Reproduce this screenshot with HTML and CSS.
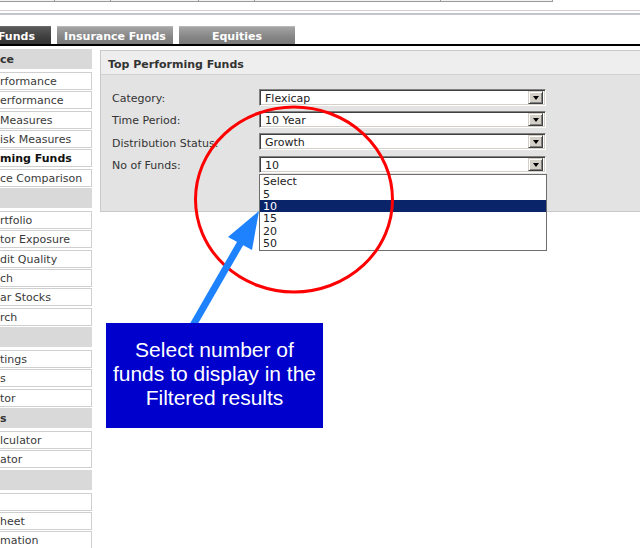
FILE: index.html
```html
<!DOCTYPE html>
<html>
<head>
<meta charset="utf-8">
<link rel="stylesheet" href="styles.css">
</head>
<body>
<div class="page">
  <div class="topcells">
    <div class="cell w55"></div>
    <div class="cell w56"></div>
    <div class="cell w88"></div>
    <div class="cell w56"></div>
    <div class="cell w186"></div>
    <div class="cell w112"></div>
  </div>
  <div class="rule1"></div>
  <div class="rule2"></div>
  <div class="tabs">
    <div class="tab active">Mutual Funds</div>
    <div class="tab">Insurance Funds</div>
    <div class="tab">Equities</div>
  </div>
  <div class="tabline"></div>
  <div class="main">
    <div class="sidebar">
      <div class="sh">ce</div>
      <div class="si">rformance</div>
      <div class="si">erformance</div>
      <div class="si">Measures</div>
      <div class="si">isk Measures</div>
      <div class="si cur">ming Funds</div>
      <div class="si">ce Comparison</div>
      <div class="sh"></div>
      <div class="si">rtfolio</div>
      <div class="si">tor Exposure</div>
      <div class="si">dit Quality</div>
      <div class="si">ch</div>
      <div class="si">ar Stocks</div>
      <div class="si">rch</div>
      <div class="sh"></div>
      <div class="si">tings</div>
      <div class="si">s</div>
      <div class="si">tor</div>
      <div class="sh">s</div>
      <div class="si">lculator</div>
      <div class="si">ator</div>
      <div class="sh"></div>
      <div class="si"></div>
      <div class="si">heet</div>
      <div class="si">mation</div>
    </div>
    <div class="panel">
      <div class="ptitle">Top Performing Funds</div>
      <div class="form">
        <div class="row">
          <div class="lbl">Category:</div>
          <div class="sel"><span class="val">Flexicap</span><span class="btn"><span class="tri"></span></span></div>
        </div>
        <div class="row">
          <div class="lbl">Time Period:</div>
          <div class="sel"><span class="val">10 Year</span><span class="btn"><span class="tri"></span></span></div>
        </div>
        <div class="row">
          <div class="lbl">Distribution Status:</div>
          <div class="sel"><span class="val">Growth</span><span class="btn"><span class="tri"></span></span></div>
        </div>
        <div class="row">
          <div class="lbl">No of Funds:</div>
          <div class="sel open"><span class="val">10</span><span class="btn"><span class="tri"></span></span>
            <div class="list">
              <div class="opt">Select</div>
              <div class="opt">5</div>
              <div class="opt hl">10</div>
              <div class="opt">15</div>
              <div class="opt">20</div>
              <div class="opt">50</div>
            </div>
          </div>
        </div>
      </div>
    </div>
  </div>
  <svg class="overlay" width="640" height="548" viewBox="0 0 640 548">
    <ellipse cx="294" cy="199.5" rx="98.5" ry="92.5" fill="none" stroke="#ff0000" stroke-width="3"/>
    <line x1="188" y1="334" x2="241" y2="242" stroke="#1e82ff" stroke-width="7"/>
    <polygon points="259,211 228,237 252,250" fill="#1e82ff"/>
  </svg>
  <div class="callout">Select number of funds to display in the Filtered results</div>
</div>
</body>
</html>
```
FILE: styles.css
```css
html, body {
  margin: 0;
  padding: 0;
  background: #ffffff;
}
.page {
  position: relative;
  width: 640px;
  height: 548px;
  overflow: hidden;
  font-family: "DejaVu Sans", Verdana, sans-serif;
  font-size: 11px;
  color: #333333;
}
.topcells {
  display: flex;
  height: 1px;
}
.cell {
  height: 1px;
  background: #f2f2f2;
  border-bottom: 1px solid #9a9a9a;
  border-right: 1px solid #9a9a9a;
  box-sizing: content-box;
}
.w55 { width: 54px; }
.w56 { width: 55px; }
.w88 { width: 87px; }
.w186 { width: 185px; }
.w112 { width: 111px; }
.rule1 {
  margin-top: 9px;
  height: 1px;
  background: #d6cbd0;
}
.rule2 {
  margin-top: 2px;
  height: 2px;
  background: #c3c6cf;
}
.tabs {
  display: flex;
  gap: 6px;
  margin-top: 11px;
  margin-left: -65px;
  height: 18px;
}
.tab {
  width: 116px;
  height: 18px;
  line-height: 19px;
  text-align: center;
  font-weight: bold;
  color: #ffffff;
  background: linear-gradient(#a4a4a4, #858585 60%, #7a7a7a);
  box-sizing: border-box;
  border-top: 1px solid #b8b8b8;
  overflow: hidden;
}
.tab.active {
  background: linear-gradient(#5a5a5a, #3e3e3e 60%, #333333);
  border-top: 1px solid #6a6a6a;
}
.tabline {
  height: 2px;
  background: #000000;
}
.main {
  display: flex;
  gap: 8px;
  margin-top: 3px;
}
.sidebar {
  width: 92px;
  display: flex;
  flex-direction: column;
  gap: 1.4px;
}
.sh {
  height: 20px;
  box-sizing: border-box;
  padding-top: 2px;
  line-height: 18px;
  background: #d9d9d9;
  font-weight: bold;
  color: #333333;
  margin-bottom: 1.4px;
}
.si {
  height: 18px;
  padding-top: 2px;
  line-height: 14px;
  box-sizing: border-box;
  background: #ffffff;
  border: 1px solid #cfcfcf;
  border-left: none;
  white-space: nowrap;
  overflow: hidden;
  color: #3a3a3a;
}
.si.cur {
  font-weight: bold;
  color: #111111;
}
.panel {
  flex: 1;
  margin-top: 1px;
  height: 160px;
  background: #e3e3e3;
  border: 1px solid #c9c9c9;
  border-right: none;
}
.ptitle {
  height: 24px;
  box-sizing: border-box;
  padding-top: 3px;
  line-height: 21px;
  padding-left: 7px;
  background: #eeeeee;
  border-bottom: 1px solid #d2d2d2;
  font-weight: bold;
  color: #333333;
}
.form {
  padding: 13.5px 0 0 11px;
  display: flex;
  flex-direction: column;
  gap: 5.4px;
}
.row {
  display: flex;
  align-items: center;
  height: 17px;
}
.lbl {
  width: 147px;
  padding-top: 3px;
  color: #333333;
  white-space: nowrap;
}
.sel {
  position: relative;
  width: 287px;
  height: 17px;
  box-sizing: border-box;
  background: #ffffff;
  border: 1px solid;
  border-color: #808080 #ffffff #ffffff #808080;
  box-shadow: inset 1px 1px #404040, inset -1px -1px #d4d0c8;
  display: flex;
  align-items: center;
  padding: 1px 2px 1px 5px;
}
.val {
  flex: 1;
  padding-top: 2px;
  color: #222222;
}
.btn {
  width: 15px;
  height: 13px;
  box-sizing: border-box;
  background: #d4d0c8;
  border: 1px solid;
  border-color: #d4d0c8 #404040 #404040 #d4d0c8;
  box-shadow: inset 1px 1px #ffffff, inset -1px -1px #808080;
  display: flex;
  align-items: center;
  justify-content: center;
}
.tri {
  width: 0;
  height: 0;
  border-left: 3.5px solid transparent;
  border-right: 3.5px solid transparent;
  border-top: 4px solid #000000;
  margin-top: 1px;
}
.list {
  position: absolute;
  left: -1px;
  top: 17.5px;
  width: 288px;
  box-sizing: border-box;
  background: #ffffff;
  border: 1px solid #6e6e6e;
  z-index: 5;
}
.opt {
  height: 12.4px;
  line-height: 14px;
  padding-left: 3px;
  color: #222222;
  overflow: hidden;
}
.opt.hl {
  background: #0a246a;
  color: #ffffff;
}
.overlay {
  position: absolute;
  left: 0;
  top: 0;
  z-index: 10;
}
.callout {
  position: absolute;
  left: 106px;
  top: 323px;
  width: 217px;
  height: 105px;
  box-sizing: border-box;
  padding: 15px 6px 0 6px;
  background: #0000cc;
  color: #ffffff;
  font-family: "Liberation Sans", Arial, sans-serif;
  font-size: 21px;
  line-height: 24px;
  text-align: center;
  z-index: 11;
}
```
